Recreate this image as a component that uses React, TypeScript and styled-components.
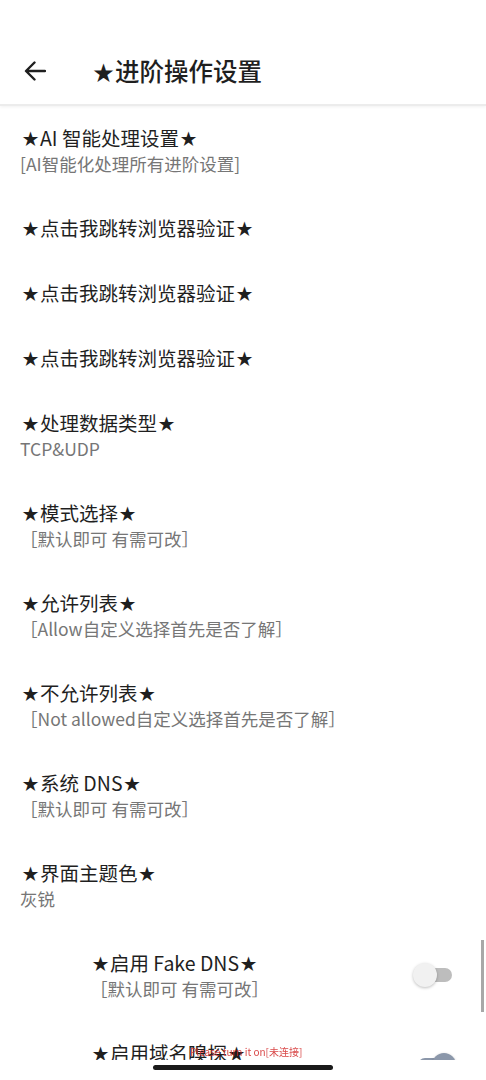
import styled, { createGlobalStyle } from 'styled-components';

const GlobalStyle = createGlobalStyle`
    html, body {
        margin: 0;
        padding: 0;
        background: #fff;
        height: 1080px;
        overflow: hidden;
    }
    body {
        font-family: 'Noto Sans CJK SC', 'Noto Sans', sans-serif;
        color: #1f1f1f;
    }
`

type Setting = {
    title: string;
    sub?: string;
    indent?: boolean;
    toggle?: 'off' | 'on';
    hiddenSub?: boolean;
};

const settings: Setting[] = [
    { title: '★AI 智能处理设置★', sub: '[AI智能化处理所有进阶设置]' },
    { title: '★点击我跳转浏览器验证★' },
    { title: '★点击我跳转浏览器验证★' },
    { title: '★点击我跳转浏览器验证★' },
    { title: '★处理数据类型★', sub: 'TCP&UDP' },
    { title: '★模式选择★', sub: '［默认即可 有需可改］' },
    { title: '★允许列表★', sub: '［Allow自定义选择首先是否了解］' },
    { title: '★不允许列表★', sub: '［Not allowed自定义选择首先是否了解］' },
    { title: '★系统 DNS★', sub: '［默认即可 有需可改］' },
    { title: '★界面主题色★', sub: '灰锐' },
    { title: '★启用 Fake DNS★', sub: '［默认即可 有需可改］', indent: true, toggle: 'off' },
    { title: '★启用域名嗅探★', indent: true, toggle: 'on', hiddenSub: true },
];

// splits a label so the stars can be drawn a bit smaller than the text
const withStars = (text: string, size: number, cell: number) =>
    text.split(/(★)/).filter(Boolean).map((part, i) =>
        part === '★'
            ? <Star key={i} $size={size} $cell={cell}>★</Star>
            : <span key={i}>{part}</span>
    );

export default function App() {
    return (
        <>
            <GlobalStyle />
            <Page>
                <Header>
                    <BackButton>
                        <svg width="22" height="20" viewBox="0 0 22 20" fill="none">
                            <path d="M21 10H2.5M10.5 1.5L2 10l8.5 8.5" stroke="#1f1f1f" strokeWidth="2.4" strokeLinecap="round" strokeLinejoin="round" />
                        </svg>
                    </BackButton>
                    <HeaderTitle>{withStars('★进阶操作设置', 21, 23)}</HeaderTitle>
                </Header>
                <List>
                    {settings.map((s, i) => (
                        <Item key={i} $indent={s.indent}>
                            <ItemText>
                                <Title>{withStars(s.title, 16.5, 19)}</Title>
                                {s.sub && <Sub>{s.sub}</Sub>}
                                {s.hiddenSub && <SubSpacer />}
                            </ItemText>
                            {s.toggle && (
                                <Switch $on={s.toggle === 'on'}>
                                    <Thumb $on={s.toggle === 'on'} />
                                </Switch>
                            )}
                        </Item>
                    ))}
                </List>
            </Page>
            <ScrollThumb />
            <Toast>Please turn it on[未连接]</Toast>
            <NavArea>
                <HomeBar />
            </NavArea>
        </>
    );
}

const Page = styled.div`
    width: 486px;
    height: 1080px;
    overflow: hidden;
    display: flex;
    flex-direction: column;
`

const Header = styled.header`
    flex-shrink: 0;
    height: 46px;
    padding: 48px 0 10px 24px;
    display: flex;
    align-items: center;
    border-bottom: 2px solid #ececec;
    box-shadow: 0 1px 3px rgba(0, 0, 0, 0.06);
`

const BackButton = styled.div`
    width: 22px;
    height: 20px;
    display: flex;
    margin-right: 46px;
`

const HeaderTitle = styled.h1`
    margin: 0;
    font-size: 24.5px;
    font-weight: 500;
    line-height: 30px;
    height: 30px;
    color: #1f1f1f;
`

const Star = styled.span<{ $size: number; $cell: number }>`
    display: inline-block;
    width: ${p => p.$cell}px;
    text-align: center;
    font-size: ${p => p.$size}px;
    line-height: 1;
    vertical-align: 1px;
`

const List = styled.div`
    display: flex;
    flex-direction: column;
    margin-top: -1px;
`

const Item = styled.div<{ $indent?: boolean }>`
    display: flex;
    align-items: center;
    justify-content: space-between;
    padding: 19px 34px 19px ${p => (p.$indent ? '91px' : '21px')};
`

const ItemText = styled.div`
    display: flex;
    flex-direction: column;
`

const Title = styled.div`
    font-size: 19.5px;
    line-height: 27px;
    height: 27px;
    white-space: nowrap;
    color: #1f1f1f;
`

const Sub = styled.div`
    margin-left: -1px;
    font-size: 17.5px;
    line-height: 25px;
    height: 25px;
    color: #767676;
`

const SubSpacer = styled.div`
    height: 25px;
`

const Switch = styled.div<{ $on: boolean }>`
    position: relative;
    width: 34px;
    height: 14px;
    border-radius: 7px;
    background: ${p => (p.$on ? '#8b97aa' : '#bdbdbd')};
`

const Thumb = styled.div<{ $on: boolean }>`
    position: absolute;
    top: -5px;
    left: ${p => (p.$on ? '14px' : '-5px')};
    width: 24px;
    height: 24px;
    border-radius: 50%;
    background: ${p => (p.$on ? '#8b97aa' : '#f1f1f1')};
    box-shadow: 0 1px 3px rgba(0, 0, 0, 0.25);
`

const ScrollThumb = styled.div`
    position: fixed;
    right: 2px;
    top: 940px;
    width: 3px;
    height: 72px;
    background: #a8a8a8;
`

const Toast = styled.div`
    position: fixed;
    left: 190px;
    top: 1045px;
    font-size: 10px;
    line-height: 14px;
    color: rgba(210, 40, 40, 0.85);
`

const NavArea = styled.div`
    position: fixed;
    left: 0;
    right: 0;
    bottom: 0;
    height: 20px;
    background: #fff;
    display: flex;
    justify-content: center;
`

const HomeBar = styled.div`
    margin-top: 5px;
    width: 180px;
    height: 5px;
    border-radius: 3px;
    background: #1a1a1a;
`
